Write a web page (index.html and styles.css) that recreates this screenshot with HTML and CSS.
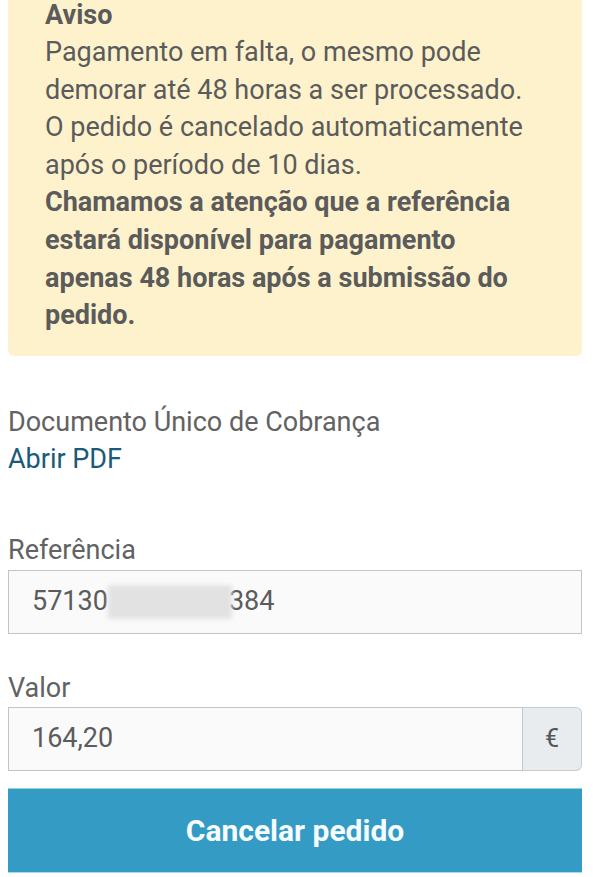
FILE: index.html
```html
<!DOCTYPE html>
<html lang="pt">
<head>
<meta charset="utf-8">
<title>Pagamento</title>
<link rel="stylesheet" href="styles.css">
</head>
<body>
<main class="page">
  <div class="alert">
    <div class="alert-title">Aviso</div>
    <p class="alert-text">Pagamento em falta, o mesmo pode demorar até 48 horas a ser processado. O pedido é cancelado automaticamente após o período de 10 dias.</p>
    <p class="alert-strong">Chamamos a atenção que a referência estará disponível para pagamento apenas 48 horas após a submissão do pedido.</p>
  </div>

  <section class="doc">
    <div class="label">Documento Único de Cobrança</div>
    <a class="link" href="#">Abrir PDF</a>
  </section>

  <section class="field field-ref">
    <div class="label">Referência</div>
    <div class="input">57130<span class="masked"></span>384</div>
  </section>

  <section class="field field-valor">
    <div class="label">Valor</div>
    <div class="input-group">
      <div class="input input-grow">164,20</div>
      <div class="addon">€</div>
    </div>
  </section>

  <button class="btn" type="button">Cancelar pedido</button>
</main>
</body>
</html>
```
FILE: styles.css
```css
* { box-sizing: border-box; }

html, body {
  margin: 0;
  background: #ffffff;
}

body {
  font-family: Roboto, "Liberation Sans", Arial, sans-serif;
  font-size: 27px;
  line-height: 37.6px;
  color: #5f5f5f;
  padding: 0 11px 0 8px;
}

.page {
  margin-top: -20px;
  display: flex;
  flex-direction: column;
}

.alert {
  background: #fdf2cc;
  border-radius: 6px;
  padding: 21px 37px 21px 37px;
  color: #5b5b5b;
}

.alert-title {
  font-weight: 700;
  line-height: 28px;
  margin-bottom: 5px;
}

.alert-text,
.alert-strong {
  margin: 0;
}

.alert-strong {
  font-weight: 700;
}

.doc {
  margin-top: 48px;
  display: flex;
  flex-direction: column;
}

.label {
  color: #626262;
}

.link {
  color: #1b5a78;
  text-decoration: none;
}

.field-ref {
  margin-top: 53px;
}

.field-valor {
  margin-top: 36px;
}

.input {
  height: 64px;
  border: 1px solid #c4c4c4;
  background: #fafafa;
  padding: 0 23px;
  display: flex;
  align-items: center;
  color: #5c5c5c;
  font-size: 27px;
}

.masked {
  display: inline-block;
  width: 124px;
  height: 34px;
  margin-right: -3px;
  background: #e2e2e2;
  filter: blur(2px);
}

.input-group {
  display: flex;
}

.input-grow {
  flex: 1;
}

.addon {
  width: 59px;
  height: 64px;
  border: 1px solid #c9cdd0;
  border-left: none;
  border-radius: 0 6px 6px 0;
  background: #e9ecef;
  display: flex;
  align-items: center;
  justify-content: center;
  color: #555;
  font-size: 25px;
}

.btn {
  margin-top: 17px;
  height: 85px;
  border: none;
  border-top: 1px solid #8fd0e4;
  border-bottom: 1px solid #a6dbe9;
  background: #339bc4;
  color: #f7fcfe;
  font-family: Roboto, "Liberation Sans", Arial, sans-serif;
  font-weight: 700;
  font-size: 30px;
  width: 100%;
  padding: 0;
  cursor: pointer;
}
```
